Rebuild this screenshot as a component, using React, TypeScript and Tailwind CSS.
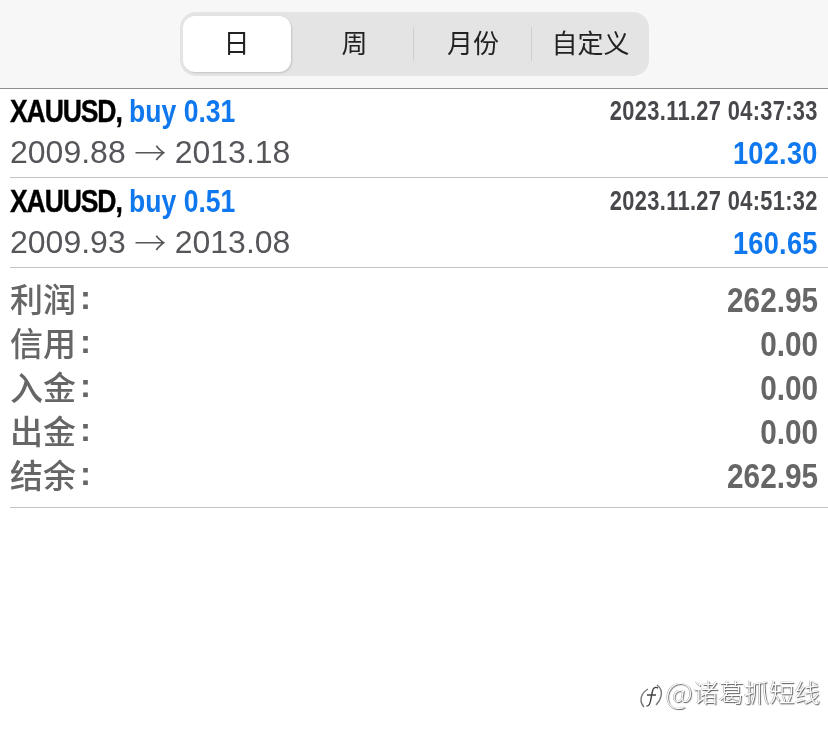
const cjk = "font-['Noto_Sans_CJK_SC','Noto_Sans',sans-serif]";
const bold = "font-['Liberation_Sans',sans-serif] font-bold";
const sans = "font-['Liberation_Sans',sans-serif]";

const trades = [
  { lot: "buy 0.31", from: "2009.88", to: "2013.18", time: "2023.11.27 04:37:33", profit: "102.30" },
  { lot: "buy 0.51", from: "2009.93", to: "2013.08", time: "2023.11.27 04:51:32", profit: "160.65" },
];
const summary = [
  ["利润", "262.95"],
  ["信用", "0.00"],
  ["入金", "0.00"],
  ["出金", "0.00"],
  ["结余", "262.95"],
];

function Trade({ t, h, top }: { t: (typeof trades)[number]; h: string; top: string }) {
  return (
    <div className={`ml-[10px] border-b border-[#c4c4c4] pr-[10px] ${h}`}>
      <div className={`flex items-center justify-between ${top}`}>
        <div className={`${bold} mb-[1px] origin-left scale-x-[0.83] whitespace-nowrap text-[32px] leading-[44px] text-black`}>
          <span className="tracking-[-1.35px] [-webkit-text-stroke:0.4px_#000]">XAUUSD,</span> <span className="text-[#0f78ee]">{t.lot}</span>
        </div>
        <div className={`${bold} mb-[1px] origin-right scale-x-[0.81] whitespace-nowrap text-[27px] leading-[44px] tracking-[0.4px] text-[#48484c]`}>{t.time}</div>
      </div>
      <div className="flex h-[36px] items-center justify-between">
        <div className={`${sans} flex items-center text-[32px] leading-[36px] text-[#55555a]`}>
          <span>{t.from}</span>
          <span className={`${cjk} mx-[8.5px] mb-[2px] font-light leading-[36px]`}>→</span>
          <span>{t.to}</span>
        </div>
        <div className={`${bold} mt-[1px] origin-right scale-x-[0.85] text-[32px] leading-[36px] tracking-[0.3px] text-[#0f78ee]`}>{t.profit}</div>
      </div>
    </div>
  );
}

export default function App() {
  return (
    <div className="relative h-[739px] w-[828px] overflow-hidden bg-white blur-[0.3px]">
      <div className="flex h-[89px] justify-center border-b border-[#8e8e8e] bg-[#f7f7f7] pt-[12px]">
        <div className={`${cjk} flex h-[64px] w-[469px] items-center rounded-[16px] bg-[#e4e4e4] pl-[3px] text-[26px] leading-[34px] text-[#222]`}>
          <div className="flex h-[56px] w-[108px] items-center justify-center rounded-[12px] bg-white pb-[4px] shadow-[1px_1px_2px_rgba(0,0,0,0.15)]">日</div>
          <div className="flex h-[34px] w-[123px] items-center justify-center border-r border-[#cfcfcf] pb-[4px] pl-[6px]">周</div>
          <div className="flex h-[34px] w-[118px] items-center justify-center border-r border-[#cfcfcf] pb-[4px] pl-[2px]">月份</div>
          <div className="flex h-[34px] w-[117px] items-center justify-center pb-[4px] pl-[1px]">自定义</div>
        </div>
      </div>
      {trades.map((t, i) => (
        <Trade key={t.time} t={t} h={i === 0 ? "h-[89px]" : "h-[90px]"} top={i === 0 ? "h-[45px]" : "h-[46px]"} />
      ))}
      <div className="ml-[10px] border-b border-[#c4c4c4] pb-[9px] pr-[10px] pt-[10px]">
        {summary.map(([k, v]) => (
          <div key={k} className="flex h-[44px] items-center justify-between">
            <span className="mb-[4px] flex items-center text-[#666]">
              <span className={`${cjk} text-[33px] font-medium leading-[44px]`}>{k}</span>
              <span className={`${bold} ml-[4px] text-[33px] leading-[44px]`}>:</span>
            </span>
            <span className={`${bold} origin-right scale-x-[0.85] text-[35px] leading-[44px] text-[#666]`}>{v}</span>
          </div>
        ))}
      </div>
      <div className={`${cjk} absolute left-[640px] top-[672px] flex items-center text-[25.4px] font-light leading-[38px] text-white [text-shadow:1px_1px_1px_#555,-0.5px_-0.5px_0.5px_#999]`}>
        <svg width="24" height="28" viewBox="0 0 24 28" fill="none" className="mr-[1px] mt-[8px]" strokeWidth="1.4">
          <path d="M8 8C3 11 1 15 1 19c0 3 1 5 3 7" stroke="#777" />
          <path d="M17 4c4 3 5 7 4 11-.5 3-2 6-5 9" stroke="#777" />
          <path d="M18 7c-3-1.5-5 0-5.500 3l-2 10c-.5 3-2 5-4 5M7 14h9" stroke="#444" />
        </svg>
        <span className="w-[28px] text-center text-[31px] font-thin">@</span>
        <span>诸葛抓短线</span>
      </div>
    </div>
  );
}
